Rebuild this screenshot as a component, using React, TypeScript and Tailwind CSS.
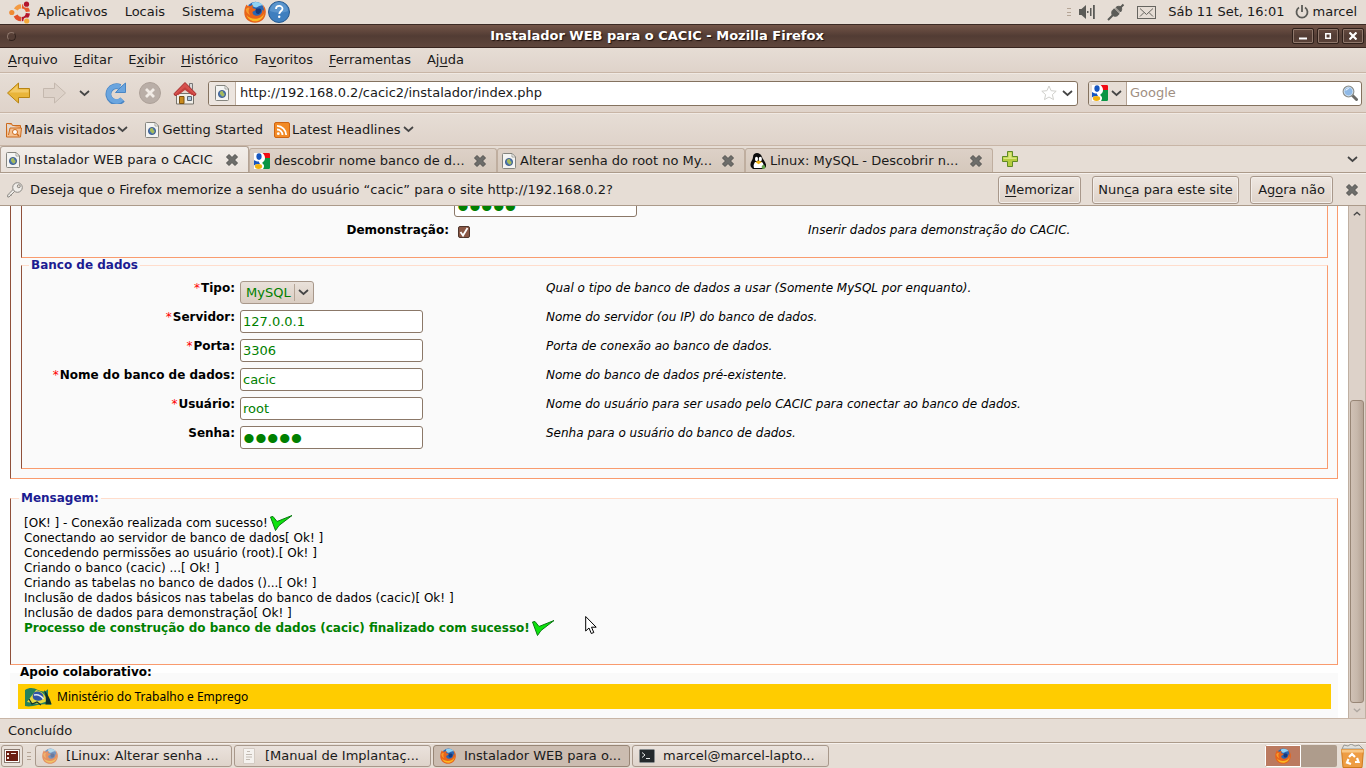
import React, { useState } from 'react';

type IconProps = { className?: string };

/* ---------- icons ---------- */

const Chevron: React.FC<IconProps> = ({ className = 'w-[11px] h-[7px]' }) => (
  <svg className={className} viewBox="0 0 11 7" fill="none" stroke="#454545" strokeWidth="1.700">
    <path d="M1 1l4.500 4L10 1" />
  </svg>
);

const UbuntuLogo = () => (
  <svg className="w-[23px] h-[23px]" viewBox="0 0 23 23" fill="none">
    <path d="M6.800 8.500A6.500 6.500 0 0 1 12 5.300" stroke="#f49b42" strokeWidth="4.200" />
    <path d="M13 5.300A6.500 6.500 0 0 1 18.900 10.800" stroke="#e8592a" strokeWidth="4.200" />
    <path d="M18.900 12.300A6.500 6.500 0 0 1 12.800 18.200" stroke="#b3152d" strokeWidth="4.200" />
    <path d="M12.200 18.200A6.500 6.500 0 0 1 6.600 14.500" stroke="#e2502b" strokeWidth="4.200" />
    <circle cx="2.800" cy="11.500" r="2.600" fill="#ef8a35" />
    <circle cx="17.500" cy="3.200" r="3.500" fill="#e6ddd5" />
    <circle cx="17.500" cy="3.200" r="2.600" fill="#b3152d" />
    <circle cx="17.700" cy="20" r="3.400" fill="#e6ddd5" />
    <circle cx="17.700" cy="20" r="2.600" fill="#f5a93a" />
  </svg>
);

const FirefoxIcon: React.FC<IconProps> = ({ className = 'w-[22px] h-[22px]' }) => (
  <svg className={className} viewBox="0 0 22 22">
    <circle cx="11.500" cy="9.800" r="9" fill="#2a66b4" />
    <path d="M8 2c3-1.800 8-1.300 10.500 1.800C17 5 15 4.500 13.500 6 12 7 10 6 8.500 5z" fill="#8fd2f3" />
    <path d="M12 7.500c2 .5 4-1 5 1s-1 4.500-3 4.500-3-3-2-5.500z" fill="#173a7c" />
    <path d="M2.500 3.500C3 4.800 4 4.800 6 5.200 7 4.200 8.500 4 9.300 4.300 8.500 5.300 8.300 6.800 9 7.300c1 .6 3 .3 2.800 1.200C11 10 9 10 8.500 11c-.2 2.500 2 4 4.500 3.700 3.500-.3 5.500-2.700 5.300-6.200 1 .5 1.400 1.500 1.500 2.200.3-3-.3-5.200-1.300-7.200C20.800 5.200 22 8.300 21.800 11.500 21.500 17.500 17 21.800 11 21.800S.3 17.500.3 11.500C.3 8.300 1.200 5.500 2.500 3.500z" fill="#e8641b" />
    <path d="M20.300 12c-.8 5-4.500 8.300-9 8.300-3.800 0-7.300-2.300-8.800-6.300 2 2.500 5 3.800 8.300 3.800 4.200 0 7.700-1.800 9.500-5.800z" fill="#fbb924" />
    <path d="M1.800 8.500C2.500 7 4 6.500 5.500 7 4 9 4.500 12 6 14 3.500 13 2 11 1.800 8.500z" fill="#f79a2c" />
  </svg>
);

const HelpIcon = () => (
  <svg className="w-[22px] h-[22px]" viewBox="0 0 22 22">
    <circle cx="11" cy="11" r="10.500" fill="#3f7fbf" stroke="#27598f" />
    <path d="M2 10a9 9 0 0 1 18 0c-5 2-12 2-18 0z" fill="#5b95cd" />
    <path d="M8 8c0-4 6.500-4 6.500-.3 0 2.300-3.200 2.400-3.200 5.300" fill="none" stroke="#fff" strokeWidth="1.800" />
    <circle cx="11.200" cy="15.800" r="1.200" fill="#fff" />
  </svg>
);

const SpeakerIcon = () => (
  <svg className="w-4 h-4" viewBox="0 0 16 16" fill="#5b5b57">
    <path d="M0 5h2.500L7 1v14l-4.500-4H0zM8 7h1.500v2H8zM11 4h1.500v8H11zM14 1h1.800v14H14z" />
  </svg>
);

const PlugIcon = () => (
  <svg className="w-[18px] h-[18px]" viewBox="0 0 18 18" fill="none" stroke="#5b5b57">
    <path d="M1 17l5-5M12 6l4.500-4.500" strokeWidth="2" />
    <path d="M5 11.500C4 8 6 6 8.500 5.500l4 4C12 12 10 14 6.500 13z" fill="#5b5b57" />
    <path d="M9 4.500C10 3 13 3 14 4s1 3.500-.5 5z" fill="#5b5b57" />
    <path d="M7 4.500l6.500 6.500" stroke="#e6ddd5" />
  </svg>
);

const MailIcon = () => (
  <svg className="w-[19px] h-[13px]" viewBox="0 0 19 13" fill="none" stroke="#66645f">
    <rect x=".5" y=".5" width="18" height="12" />
    <path d="M3 2.500l6.500 6 6.500-6M3 10.500l4-4M16 10.500l-4-4" />
  </svg>
);

const PowerIcon = () => (
  <svg className="w-[14px] h-[14px]" viewBox="0 0 14 14" fill="none" stroke="#5b5b57" strokeWidth="1.800">
    <path d="M4 2.500a5.500 5.500 0 1 0 6 0M7 0v7" />
  </svg>
);

const PageIcon = () => (
  <svg className="w-[14px] h-4 shrink-0" viewBox="0 0 14 16">
    <path d="M.5 1.500q0-1 1-1H10L13.500 4v10.500q0 1-1 1h-11q-1 0-1-1z" fill="#f4f4f2" stroke="#85857f" />
    <path d="M10 .5V4h3.500z" fill="#fff" stroke="#85857f" strokeWidth=".7" />
    <circle cx="7" cy="9" r="3.600" fill="#4a78b5" stroke="#34507f" strokeWidth=".8" />
    <path d="M5 7c1.500-1.500 3-1 3 0s1 1 1.500 2-1 3-2 2.500S6 10 5 9z" fill="#a6ba5c" />
  </svg>
);

const GoogleIcon = () => (
  <svg className="w-4 h-4 shrink-0" viewBox="0 0 16 16">
    <rect width="16" height="16" fill="#fff" />
    <path d="M8.500 0H15q1 0 1 1v4h-5C11 3 10 1 8.500 0z" fill="#f00a12" />
    <path d="M16 5v10q0 1-1 1H9c2-3 1-4.500-1-6 2-1.500 3-3 3-5z" fill="#0a9544" />
    <ellipse cx="5" cy="3.600" rx="2.600" ry="3.300" fill="#1656c0" />
    <path d="M0 7c2 1.500 3 1.500 5 1.500 0 1 .5 1.500 1 2.500-3 0-5 .5-6 1.500z" fill="#1656c0" />
    <ellipse cx="4.500" cy="13.500" rx="3.600" ry="2.400" fill="#f2b20c" />
  </svg>
);

const TuxIcon = () => (
  <svg className="w-4 h-4 shrink-0" viewBox="0 0 16 16">
    <path d="M1 14C-1 9 3 8 3 4c0-3 2-4 4-4s4 1 5 4 5 6 4 10l-3 2H3z" fill="#0c0c0c" />
    <path d="M4 15c-1-3 0-4 1-6h7c2 2 2 4 1 6z" fill="#fff" />
    <ellipse cx="6.500" cy="6" rx="1.500" ry="2.200" fill="#fff" />
    <ellipse cx="10.300" cy="6" rx="1.600" ry="2.200" fill="#fff" />
    <path d="M5.500 9l3-1.500L12 9l-3.500 2.200z" fill="#f3b413" />
    <circle cx="13.500" cy="14" r="1.900" fill="#63a24b" />
  </svg>
);

const CloseX = () => (
  <svg className="w-3 h-3" viewBox="0 0 12 12">
    <path d="M3 .5l3 3 3-3L11.500 3l-3 3 3 3L9 11.500l-3-3-3 3L.5 9l3-3-3-3z" fill="#6d6d6a" stroke="#50504e" />
  </svg>
);

const ArrowIcon: React.FC<{ forward?: boolean }> = ({ forward }) => (
  <svg className="w-[23px] h-[22px]" viewBox="0 0 23 22">
    {forward ? (
      <path d="M22.500 11L11.500 1v5.500h-11v9h11V21z" fill="#ddd2c9" stroke="#c4b8ae" />
    ) : (
      <>
        <path d="M.5 11l11-10v5.500h11v9h-11V21z" fill="#e9b53a" stroke="#b88412" />
        <path d="M2.500 10.500L10.500 3.500v4h11v3z" fill="#f3ca66" />
      </>
    )}
  </svg>
);

const ReloadIcon = () => (
  <svg className="w-[23px] h-[22px]" viewBox="0 0 23 22">
    <path d="M18.500 17.500A8 8 0 1 1 16 5" fill="none" stroke="#4a86c4" strokeWidth="6" />
    <path d="M18 17A7.700 7.700 0 1 1 16 5" fill="none" stroke="#6aa5df" strokeWidth="4.500" />
    <path d="M21.500 1v9.500h-10l3.500-3.500 3-3z" fill="#6aa5df" stroke="#4a86c4" />
  </svg>
);

const StopIcon = () => (
  <svg className="w-[22px] h-[22px]" viewBox="0 0 22 22">
    <circle cx="11" cy="11" r="10.500" fill="#b9aea7" stroke="#ada199" />
    <path d="M7 7l8 8M15 7l-8 8" stroke="#f1ebe6" strokeWidth="2.800" />
  </svg>
);

const HomeIcon = () => (
  <svg className="w-6 h-6" viewBox="0 0 24 24">
    <path d="M16.500 2.500h3v6h-3z" fill="#d8d8d8" stroke="#777" />
    <path d="M3.500 12.500h17v10.500h-17z" fill="#f1efe9" stroke="#77736b" />
    <path d="M6.500 15.500h4.500v7H6.500z" fill="#c98a1c" stroke="#7d5310" />
    <path d="M14.500 15.500h4v4h-4z" fill="#a9c6e0" stroke="#5b6773" />
    <path d="M12 1.500L22.800 12.500q.5 2-1.800 2L12 7.500 3 14.500q-2.300 0-1.800-2z" fill="#d6504c" stroke="#a32828" strokeLinejoin="round" />
    <path d="M3.800 12.700L12 6.200l8.200 6.500-1.200 1.500L12 9l-7 5.200z" fill="#c23f3c" />
  </svg>
);

const StarIcon = () => (
  <svg className="w-4 h-4" viewBox="0 0 16 16" fill="#fff" stroke="#cfcfcb">
    <path d="M8 1l2.100 4.700 5.100.5-3.800 3.400 1.100 5L8 12l-4.500 2.600 1.100-5L.8 6.200l5.100-.5z" />
  </svg>
);

const SearchIcon = () => (
  <svg className="w-4 h-4" viewBox="0 0 16 16">
    <path d="M10 10l4.500 4.500" stroke="#6b6b68" strokeWidth="3" strokeLinecap="round" />
    <circle cx="6.500" cy="6.500" r="5.300" fill="#8fb9e6" stroke="#8f928f" strokeWidth="1.300" />
    <circle cx="6.500" cy="6.500" r="4.300" fill="none" stroke="#dbe8f5" strokeWidth=".8" />
    <path d="M3.500 6a3 3 0 0 1 4-2.500C6 4 5 5 3.500 6z" fill="#fff" />
  </svg>
);

const FolderIcon = () => (
  <svg className="w-4 h-4" viewBox="0 0 16 16" fill="none">
    <path d="M.5 1.500h5l1 2h8v3" fill="#f0a566" stroke="#cc6a1d" />
    <path d="M.5 1.500v13.500h14l1-9H4l-1.500 7" fill="#f5c08f" stroke="#cc6a1d" />
    <circle cx="9" cy="10" r="2.500" fill="#fff" stroke="#cc6a1d" />
    <path d="M11 12l2 2" stroke="#cc6a1d" strokeWidth="1.500" />
  </svg>
);

const RssIcon = () => (
  <svg className="w-4 h-4" viewBox="0 0 16 16" fill="none">
    <rect x=".5" y=".5" width="15" height="15" rx="1.500" fill="#f28a25" stroke="#cf6410" />
    <circle cx="4.300" cy="11.700" r="1.400" fill="#fff" />
    <path d="M3 7.500a5.500 5.500 0 0 1 5.500 5.500M3 3.800A9.300 9.300 0 0 1 12.200 13" stroke="#fff" strokeWidth="1.800" />
  </svg>
);

const PlusIcon = () => (
  <svg className="w-4 h-4" viewBox="0 0 16 16">
    <path d="M5.500.5h5v5h5v5h-5v5h-5v-5h-5v-5h5z" fill="#b5cc3f" stroke="#5f8a24" />
    <path d="M6.500 1.500h3v5h5v1.500h-13V6.500h5z" fill="#dbe67e" />
  </svg>
);

const KeyIcon = () => (
  <svg className="w-4 h-4" viewBox="0 0 16 16">
    <path d="M8.500 8.500L2 15H.7v-2L7 6.500" fill="#f0ede9" stroke="#8b8883" />
    <path d="M3 12.500l1.500 1.500" stroke="#8b8883" />
    <circle cx="10.500" cy="5.500" r="4.800" fill="#f0ede9" stroke="#8b8883" />
    <circle cx="11.800" cy="4.200" r="1.500" fill="#e6ddd5" stroke="#8b8883" />
  </svg>
);

const GreenCheck = () => (
  <svg className="w-[23px] h-4" viewBox="0 0 23 16" aria-label="ok">
    <path d="M.5 2L3 1.500l4 5L22 .5 9 10.500 5.500 15.500z" fill="#0de30d" stroke="#0a7a12" strokeLinejoin="round" />
  </svg>
);

const BrazilFlag = () => (
  <svg className="w-[27px] h-5" viewBox="0 0 27 20">
    <path d="M0 3c5-3 9-2 13 0s8 2 10-1v10c2 2 3 4 3.500 6-6-1-10-1-14 0S4 20 0 19z" fill="#24805c" />
    <path d="M2 15L11 3c5 1 9 4 12 11l-9 3z" fill="#e5d83e" />
    <path d="M8 11c-1-4 1-7 5-6.500s6.500 4 5 7-8.500 3-10-.5z" fill="#2f55a4" />
    <path d="M9 8c4-1 7 .5 9.500 4" fill="none" stroke="#dfe8f2" strokeWidth="1.500" />
    <path d="M19 3c3 3 6 8 7.500 14l-6 .5c1-5 0-10-1.500-14.500z" fill="#10302a" />
    <path d="M4 12l3 5 5-2 4 3" fill="none" stroke="#10302a" strokeWidth="1.200" />
  </svg>
);

const TrashIcon = () => (
  <svg className="w-[23px] h-6" viewBox="0 0 23 24">
    <path d="M1 5l2-4 4 1 3-2 4 2 4-1 4 4z" fill="#dfdfdc" stroke="#969692" />
    <path d="M.5 5.500h22L21 23.500H2z" fill="#ee9d44" stroke="#d07a1c" />
    <path d="M.5 5.500h22v3H.8z" fill="#f8c683" />
    <path d="M8 13l3-3 3 3M16 14l1.500 4H14M10 20l-4-1.500L7.500 15" fill="none" stroke="#fff" strokeWidth="2.200" />
  </svg>
);

const TerminalIcon = () => (
  <svg className="w-4 h-[14px]" viewBox="0 0 16 14" fill="none">
    <rect x=".5" y=".5" width="15" height="13" rx="1" fill="#24292c" stroke="#84898b" />
    <path d="M3 3.500L6 6 3 8.500M7 9.500h4" stroke="#e8eaea" />
  </svg>
);

const DocIcon = () => (
  <svg className="w-4 h-4" viewBox="0 0 16 16" fill="none">
    <path d="M2.500.5h11v15h-11z" fill="#f5f2ef" stroke="#d4cbc3" />
    <path d="M6 3.500h3M5 6.500h6M5 9h6M5 11.500h4" stroke="#c2bab2" />
  </svg>
);

const DesktopIcon = () => (
  <svg className="w-4 h-[14px]" viewBox="0 0 16 14">
    <rect x=".5" y=".5" width="15" height="13" fill="#fff" stroke="#8a7a70" />
    <path d="M2 2h12v10H2z" fill="#6b1d12" />
    <path d="M3 4h2v2H3zM3 8h2v2H3zM7 4h5v1H7z" fill="#f2e6e0" />
  </svg>
);

const Grip = () => (
  <div className="w-1 h-2 flex flex-col justify-between">
    <span className="h-px bg-[#b5a596]" />
    <span className="h-px bg-[#b5a596]" />
    <span className="h-px bg-[#b5a596]" />
  </div>
);

/* ---------- data ---------- */

// [before, access key, after]
const menus = [
  ['', 'A', 'rquivo'],
  ['', 'E', 'ditar'],
  ['E', 'x', 'ibir'],
  ['', 'H', 'istórico'],
  ['Fa', 'v', 'oritos'],
  ['', 'F', 'erramentas'],
  ['Aj', 'u', 'da'],
];

const tabs = [
  { title: 'Instalador WEB para o CACIC', icon: <PageIcon /> },
  { title: 'descobrir nome banco de d...', icon: <GoogleIcon /> },
  { title: 'Alterar senha do root no My...', icon: <PageIcon /> },
  { title: 'Linux: MySQL - Descobrir n...', icon: <TuxIcon /> },
];

const fields = [
  { id: 'servidor', label: 'Servidor:', value: '127.0.0.1', required: true, hint: 'Nome do servidor (ou IP) do banco de dados.' },
  { id: 'porta', label: 'Porta:', value: '3306', required: true, hint: 'Porta de conexão ao banco de dados.' },
  { id: 'banco', label: 'Nome do banco de dados:', value: 'cacic', required: true, hint: 'Nome do banco de dados pré-existente.' },
  { id: 'usuario', label: 'Usuário:', value: 'root', required: true, hint: 'Nome do usuário para ser usado pelo CACIC para conectar ao banco de dados.' },
  { id: 'senha', label: 'Senha:', value: 'cacic', required: false, password: true, hint: 'Senha para o usuário do banco de dados.' },
];

const messages = [
  'Conectando ao servidor de banco de dados[ Ok! ]',
  'Concedendo permissões ao usuário (root).[ Ok! ]',
  'Criando o banco (cacic) ...[ Ok! ]',
  'Criando as tabelas no banco de dados ()...[ Ok! ]',
  'Inclusão de dados básicos nas tabelas do banco de dados (cacic)[ Ok! ]',
  'Inclusão de dados para demonstração[ Ok! ]',
];

const tasks = [
  { title: '[Linux: Alterar senha ...', icon: <FirefoxIcon className="w-4 h-4 opacity-60" />, active: false },
  { title: '[Manual de Implantaç...', icon: <DocIcon />, active: false },
  { title: 'Instalador WEB para o...', icon: <FirefoxIcon className="w-4 h-4" />, active: true },
  { title: 'marcel@marcel-lapto...', icon: <TerminalIcon />, active: false },
];

/* ---------- shared classes ---------- */

const bar = 'bg-linear-to-b from-[#e6ddd5] to-[#dfd3ca] border-b border-[#c8b5a6]';
const button = 'h-7 border border-[#a8988b] rounded-[3px] bg-linear-to-b from-[#eee7e1] to-[#ded2c8] shadow-[inset_0_0_0_1px_#f3eeea]';
const box = 'bg-[#fafafa] border border-t-[#ffddcc] border-l-[#8f503a] border-r-[#f99b6e] border-b-[#f99b6e]';
const legend = 'text-[12px] leading-[15px] font-bold text-[#1c1c92] px-[2px]';
const textBox = 'w-[183px] h-[23px] bg-white border border-[#8b7868] rounded-[3px] px-[2px] text-[#008000] outline-none';
const passwordBox = 'w-[183px] h-[23px] bg-white border border-[#8b7868] rounded-[3px] px-[2px] pt-[2px] text-[34px] leading-[20px] font-[Liberation_Sans] text-[#008000] outline-none';

/* ---------- parts ---------- */

const TopPanel = () => (
  <header className="flex items-center justify-between h-6 pl-[9px] pr-[9px] bg-[#e6ddd5]">
    <nav className="flex items-center">
      <UbuntuLogo />
      <a href="#" className="ml-[5px]">Aplicativos</a>
      <a href="#" className="ml-[17px]">Locais</a>
      <a href="#" className="ml-[17px]">Sistema</a>
      <div className="flex ml-[10px] gap-[2px]">
        <FirefoxIcon />
        <HelpIcon />
      </div>
    </nav>
    <div className="flex items-center">
      <Grip />
      <div className="flex items-center gap-3 ml-2">
        <SpeakerIcon />
        <PlugIcon />
        <MailIcon />
      </div>
      <span className="ml-3">Sáb 11 Set, 16:01</span>
      <div className="flex items-center gap-1 ml-[10px]">
        <PowerIcon />
        <span>marcel</span>
      </div>
    </div>
  </header>
);

const windowButton = 'flex items-center justify-center w-[22px] h-4 rounded-[2px] border border-[#2f201a] shadow-[inset_0_0_0_1px_#8f776b]';

const TitleBar = () => (
  <div className="flex items-center h-6 pl-[7px] pr-[2px] border-t border-b border-t-[#3b2a24] border-b-[#38251f] bg-linear-to-b from-[#745548] via-[#523c34] to-[#5f463c]">
    <span className="w-[9px] h-[9px] rounded-full border border-[#8d766b] border-b-[#30211c] border-r-[#30211c]" />
    <h1 className="flex-1 pl-[6px] text-center font-bold text-white [text-shadow:1px_1px_1px_#20130f]">
      Instalador WEB para o CACIC - Mozilla Firefox
    </h1>
    <div className="flex gap-[3px]">
      <button aria-label="Minimizar" className={windowButton}>
        <svg className="w-2 h-2" viewBox="0 0 8 8"><path d="M0 5.500h8v2H0z" fill="#fff" /></svg>
      </button>
      <button aria-label="Maximizar" className={windowButton}>
        <svg className="w-2 h-2" viewBox="0 0 8 8"><path d="M1.800 1.800h4.500v4.500H1.800z" fill="none" stroke="#fff" strokeWidth="1.500" /></svg>
      </button>
      <button aria-label="Fechar" className={windowButton}>
        <svg className="w-2 h-2" viewBox="0 0 8 8"><path d="M.5.5l7 7M7.500.5l-7 7" stroke="#fff" strokeWidth="2.200" /></svg>
      </button>
    </div>
  </div>
);

const Toolbar = () => (
  <div className={`flex items-center h-10 pl-[7px] pr-1 border-t border-t-[#f0e9e3] ${bar}`}>
    <div className="flex items-center">
      <button aria-label="Voltar"><ArrowIcon /></button>
      <button aria-label="Avançar" className="ml-[13px]"><ArrowIcon forward /></button>
      <button aria-label="Histórico recente" className="ml-[13px]"><Chevron /></button>
      <button aria-label="Atualizar" className="ml-[14px]"><ReloadIcon /></button>
      <button aria-label="Parar" className="ml-3"><StopIcon /></button>
      <button aria-label="Página inicial" className="ml-3"><HomeIcon /></button>
    </div>
    <div className="flex flex-1 items-center h-[25px] ml-[11px] pr-1 bg-white border border-[#84725f] rounded-[3px] overflow-hidden">
      <div className="flex items-center justify-center w-[27px] h-full mr-1 bg-[#ece5df] border-r border-[#c0b0a2]">
        <PageIcon />
      </div>
      <input aria-label="Endereço" className="flex-1 min-w-0 outline-none" defaultValue="http://192.168.0.2/cacic2/instalador/index.php" />
      <StarIcon />
      <Chevron className="w-[11px] h-[7px] ml-[5px]" />
    </div>
    <div className="flex items-center w-[274px] h-[25px] ml-[10px] pr-[3px] bg-white border border-[#84725f] rounded-[3px] overflow-hidden">
      <div className="flex items-center gap-[3px] w-[38px] h-full pl-[3px] mr-[3px] bg-[#e6ddd5] border-r border-[#b5a394]">
        <GoogleIcon />
        <Chevron />
      </div>
      <input aria-label="Pesquisar" placeholder="Google" className="flex-1 min-w-0 outline-none placeholder:text-[#a08f82] placeholder:opacity-100" />
      <SearchIcon />
    </div>
  </div>
);

const Bookmarks = () => (
  <nav className={`flex items-center h-[33px] pl-[6px] border-t border-t-[#f0e9e3] ${bar}`}>
    <a href="#" className="flex items-center gap-[2px]">
      <FolderIcon />
      Mais visitados
      <Chevron />
    </a>
    <a href="#" className="flex items-center gap-[3px] ml-[17px]">
      <PageIcon />
      Getting Started
    </a>
    <a href="#" className="flex items-center gap-[2px] ml-[11px]">
      <RssIcon />
      Latest Headlines
      <Chevron />
    </a>
  </nav>
);

const TabStrip = () => {
  const [current, setCurrent] = useState(0);
  return (
    <div className="flex items-end h-[27px] pr-2 bg-[#e6ddd5] border-b border-[#ab9a8a]">
      {tabs.map((tab, i) => (
        <div
          key={tab.title}
          className={
            i === current
              ? 'flex items-center w-[249px] h-[26px] pl-[5px] pr-[10px] border border-b-0 border-[#b3a294] rounded-t-[3px] bg-linear-to-b from-[#f2ede9] to-[#e9e1da]'
              : 'flex items-center w-[248px] h-6 pl-1 pr-[10px] border border-b-0 border-[#bfae9f] rounded-t-[3px] bg-linear-to-b from-[#ddd1c7] to-[#d5c8bc]'
          }
        >
          {tab.icon}
          <button onClick={() => setCurrent(i)} className="flex-1 ml-1 text-left whitespace-nowrap">{tab.title}</button>
          <button aria-label="Fechar aba"><CloseX /></button>
        </div>
      ))}
      <button aria-label="Nova aba" className="self-center ml-[9px]"><PlusIcon /></button>
      <button aria-label="Listar abas" className="self-center ml-auto"><Chevron /></button>
    </div>
  );
};

const PasswordNotice = () => (
  <div className="flex items-center h-[33px] pl-[7px] pr-2 border-t border-t-[#f6f1ed] border-b border-b-[#ab9a8a] bg-[#e6ddd5]">
    <KeyIcon />
    <p className="flex-1 ml-[7px]">Deseja que o Firefox memorize a senha do usuário “cacic” para o site http://192.168.0.2?</p>
    <button className={`w-[83px] ${button}`}><u className="underline-offset-2">M</u>emorizar</button>
    <button className={`w-[147px] ml-[11px] ${button}`}>Nun<u className="underline-offset-2">c</u>a para este site</button>
    <button className={`w-[83px] ml-[11px] ${button}`}>Ag<u className="underline-offset-2">o</u>ra não</button>
    <button aria-label="Fechar" className="ml-[13px]"><CloseX /></button>
  </div>
);

const ScrollBar = () => (
  <div className="flex flex-col items-center w-[18px] px-px bg-[#ddd2c9] border-l border-r border-[#c0b0a2]">
    <div className="flex items-center justify-center w-full h-[15px]">
      <Chevron className="w-2 h-[5px] rotate-180" />
    </div>
    <div className="flex-[180]" />
    <div className="flex-[302] w-[14px] border border-[#988676] rounded-[3px] bg-linear-to-r from-[#d0c1b5] via-[#c7b8ab] to-[#b5a395]" />
    <div className="flex items-center justify-center w-full h-[15px]">
      <Chevron className="w-2 h-[5px] opacity-30" />
    </div>
  </div>
);

const Label: React.FC<{ htmlFor: string; required?: boolean; children: React.ReactNode }> = ({ htmlFor, required, children }) => (
  <label htmlFor={htmlFor} className="pt-[2px] pr-[5px] text-right text-[12px] leading-4 font-bold text-black">
    {required && <span className="mr-px font-normal text-[#ff0000]">*</span>}
    {children}
  </label>
);

const Hint: React.FC<{ children: React.ReactNode }> = ({ children }) => (
  <p className="pt-[2px] text-[12px] leading-4 italic text-black">{children}</p>
);

const DatabaseForm = () => (
  <fieldset className={`pt-[5px] pb-4 ${box}`}>
    <legend className={`ml-[7px] ${legend}`}>Banco de dados</legend>
    <div className="grid grid-cols-[218fr_306fr_781fr]">
      <Label htmlFor="tipo" required>Tipo:</Label>
      <div className="py-[3px]">
        <div className="grid w-[74px]">
          <select
            id="tipo"
            className="col-start-1 row-start-1 h-[23px] pl-[5px] appearance-none border border-[#a8988b] rounded-[3px] bg-linear-to-b from-[#e9e1da] to-[#dacdc2] text-[#008000] outline-none"
          >
            <option>MySQL</option>
          </select>
          <span className="col-start-1 row-start-1 self-center justify-self-end flex items-center h-[17px] pl-[3px] pr-[5px] border-l border-[#b5a596] pointer-events-none">
            <Chevron />
          </span>
        </div>
      </div>
      <Hint>Qual o tipo de banco de dados a usar (Somente MySQL por enquanto).</Hint>

      {fields.map((f) => (
        <React.Fragment key={f.id}>
          <Label htmlFor={f.id} required={f.required}>{f.label}</Label>
          <div className="flex py-[3px]">
            <input
              id={f.id}
              type={f.password ? 'password' : 'text'}
              defaultValue={f.value}
              className={f.password ? passwordBox : textBox}
            />
          </div>
          <Hint>{f.hint}</Hint>
        </React.Fragment>
      ))}
    </div>
  </fieldset>
);

const Messages = () => (
  <fieldset className={`mt-3 pt-[10px] pb-7 pl-[13px] ${box}`}>
    <legend className={`-ml-[5px] ${legend}`}>Mensagem:</legend>
    <div className="text-[12px] leading-[15px] text-black">
      <p className="flex items-end gap-[2px] h-[15px]">
        [OK! ] - Conexão realizada com sucesso!
        <GreenCheck />
      </p>
      {messages.map((m) => (
        <p key={m}>{m}</p>
      ))}
      <p className="flex items-end gap-[2px] h-[15px] font-bold text-[#008000]">
        Processo de construção do banco de dados (cacic) finalizado com sucesso!
        <GreenCheck />
      </p>
    </div>
  </fieldset>
);

const Page = () => (
  <main className="relative flex-1 px-[10px] bg-white">
    <div className={`pl-[10px] pr-[9px] pb-[9px] ${box} border-t-0`}>
      <div className="border border-t-0 border-l-[#8f503a] border-r-[#f99b6e] border-b-[#f99b6e]">
        <div className="grid grid-cols-[432fr_354fr_519fr] h-[51px] content-start">
          <span />
          {/* previous field, mostly scrolled out of view */}
          <div className="flex items-end h-[11px] overflow-hidden">
            <input type="password" aria-label="Senha do administrador" defaultValue="cacic" className={`shrink-0 ${passwordBox}`} />
          </div>
          <span />
          <div className="grid pt-[3px]">
            <Label htmlFor="demo">Demonstração:</Label>
          </div>
          <div className="pt-[9px] pl-1">
            <div className="grid w-3 h-3">
              <input id="demo" type="checkbox" defaultChecked className="col-start-1 row-start-1 appearance-none w-3 h-3 rounded-[2px] border border-[#4f362c] bg-[#8a5745]" />
              <svg className="col-start-1 row-start-1 w-3 h-3 pointer-events-none" viewBox="0 0 12 12" fill="none">
                <path d="M2.500 6l2.500 3.500L9.500 2" stroke="#fff" strokeWidth="1.800" />
              </svg>
            </div>
          </div>
          <div className="pt-[3px]">
            <Hint>Inserir dados para demonstração do CACIC.</Hint>
          </div>
        </div>
      </div>
      <DatabaseForm />
    </div>

    <Messages />

    <fieldset className="pt-1 pb-[9px] pl-2 pr-[7px] bg-[#fafafa]">
      <legend className="px-[2px] text-[12px] leading-[15px] font-bold text-black">Apoio colaborativo:</legend>
      <div className="flex items-center gap-[5px] h-[25px] pl-[7px] bg-[#ffcc00] text-[12px] text-black [font-family:'Noto_Sans',sans-serif]">
        <BrazilFlag />
        Ministério do Trabalho e Emprego
      </div>
    </fieldset>

    {/* mouse pointer */}
    <svg className="absolute left-[585px] top-[409px] w-3 h-5" viewBox="0 0 12 20">
      <path d="M.7 1.500v14.500l3.300-3 2.300 5.500 2.500-1L6.500 12.200h4.700z" fill="#fff" stroke="#000" />
    </svg>
  </main>
);

const Taskbar = () => (
  <footer className="flex items-center h-[25px] pl-px pr-[2px] border-t border-t-[#f6f1ed] bg-[#e6ddd5]">
    <button aria-label="Mostrar área de trabalho" className="flex items-center justify-center w-[22px] h-[22px] border border-[#a8988b] rounded-[3px] bg-[#e9e1da]">
      <DesktopIcon />
    </button>
    <div className="ml-1 mr-1"><Grip /></div>
    <div className="flex flex-1 gap-[2px]">
      {tasks.map((t) => (
        <button
          key={t.title}
          className={
            t.active
              ? 'flex items-center gap-2 w-[197px] h-[22px] pl-[6px] border border-[#988676] rounded-[3px] bg-[#cbbcb0] whitespace-nowrap'
              : 'flex items-center gap-2 w-[197px] h-[22px] pl-[6px] border border-[#a8988b] rounded-[3px] bg-linear-to-b from-[#eae2dc] to-[#dfd4cb] whitespace-nowrap'
          }
        >
          {t.icon}
          {t.title}
        </button>
      ))}
    </div>
    <div className="flex h-[22px] rounded-[2px] overflow-hidden bg-[#ae9c8c]">
      <div className="flex items-center justify-center w-9 border border-white bg-[#bb7a60]">
        <FirefoxIcon className="w-4 h-4" />
      </div>
      <div className="w-9" />
    </div>
    <div className="ml-1"><TrashIcon /></div>
  </footer>
);

const App: React.FC = () => (
  <div className="flex flex-col min-h-screen text-[13px] text-[#1a1a1a] [font-family:'DejaVu_Sans',sans-serif]">
    <TopPanel />
    <TitleBar />
    <nav className={`flex items-center h-[25px] pl-2 gap-4 ${bar}`}>
      {menus.map(([before, key, after]) => (
        <a href="#" key={before + key}>
          {before}<u className="underline-offset-2">{key}</u>{after}
        </a>
      ))}
    </nav>
    <Toolbar />
    <Bookmarks />
    <TabStrip />
    <PasswordNotice />
    <div className="flex flex-1">
      <Page />
      <ScrollBar />
    </div>
    <div className="flex items-center h-[25px] pl-2 border-t border-t-[#c8b5a6] border-b border-b-[#ab9a8a] bg-[#e6ddd5]">Concluído</div>
    <Taskbar />
  </div>
);

export default App;
